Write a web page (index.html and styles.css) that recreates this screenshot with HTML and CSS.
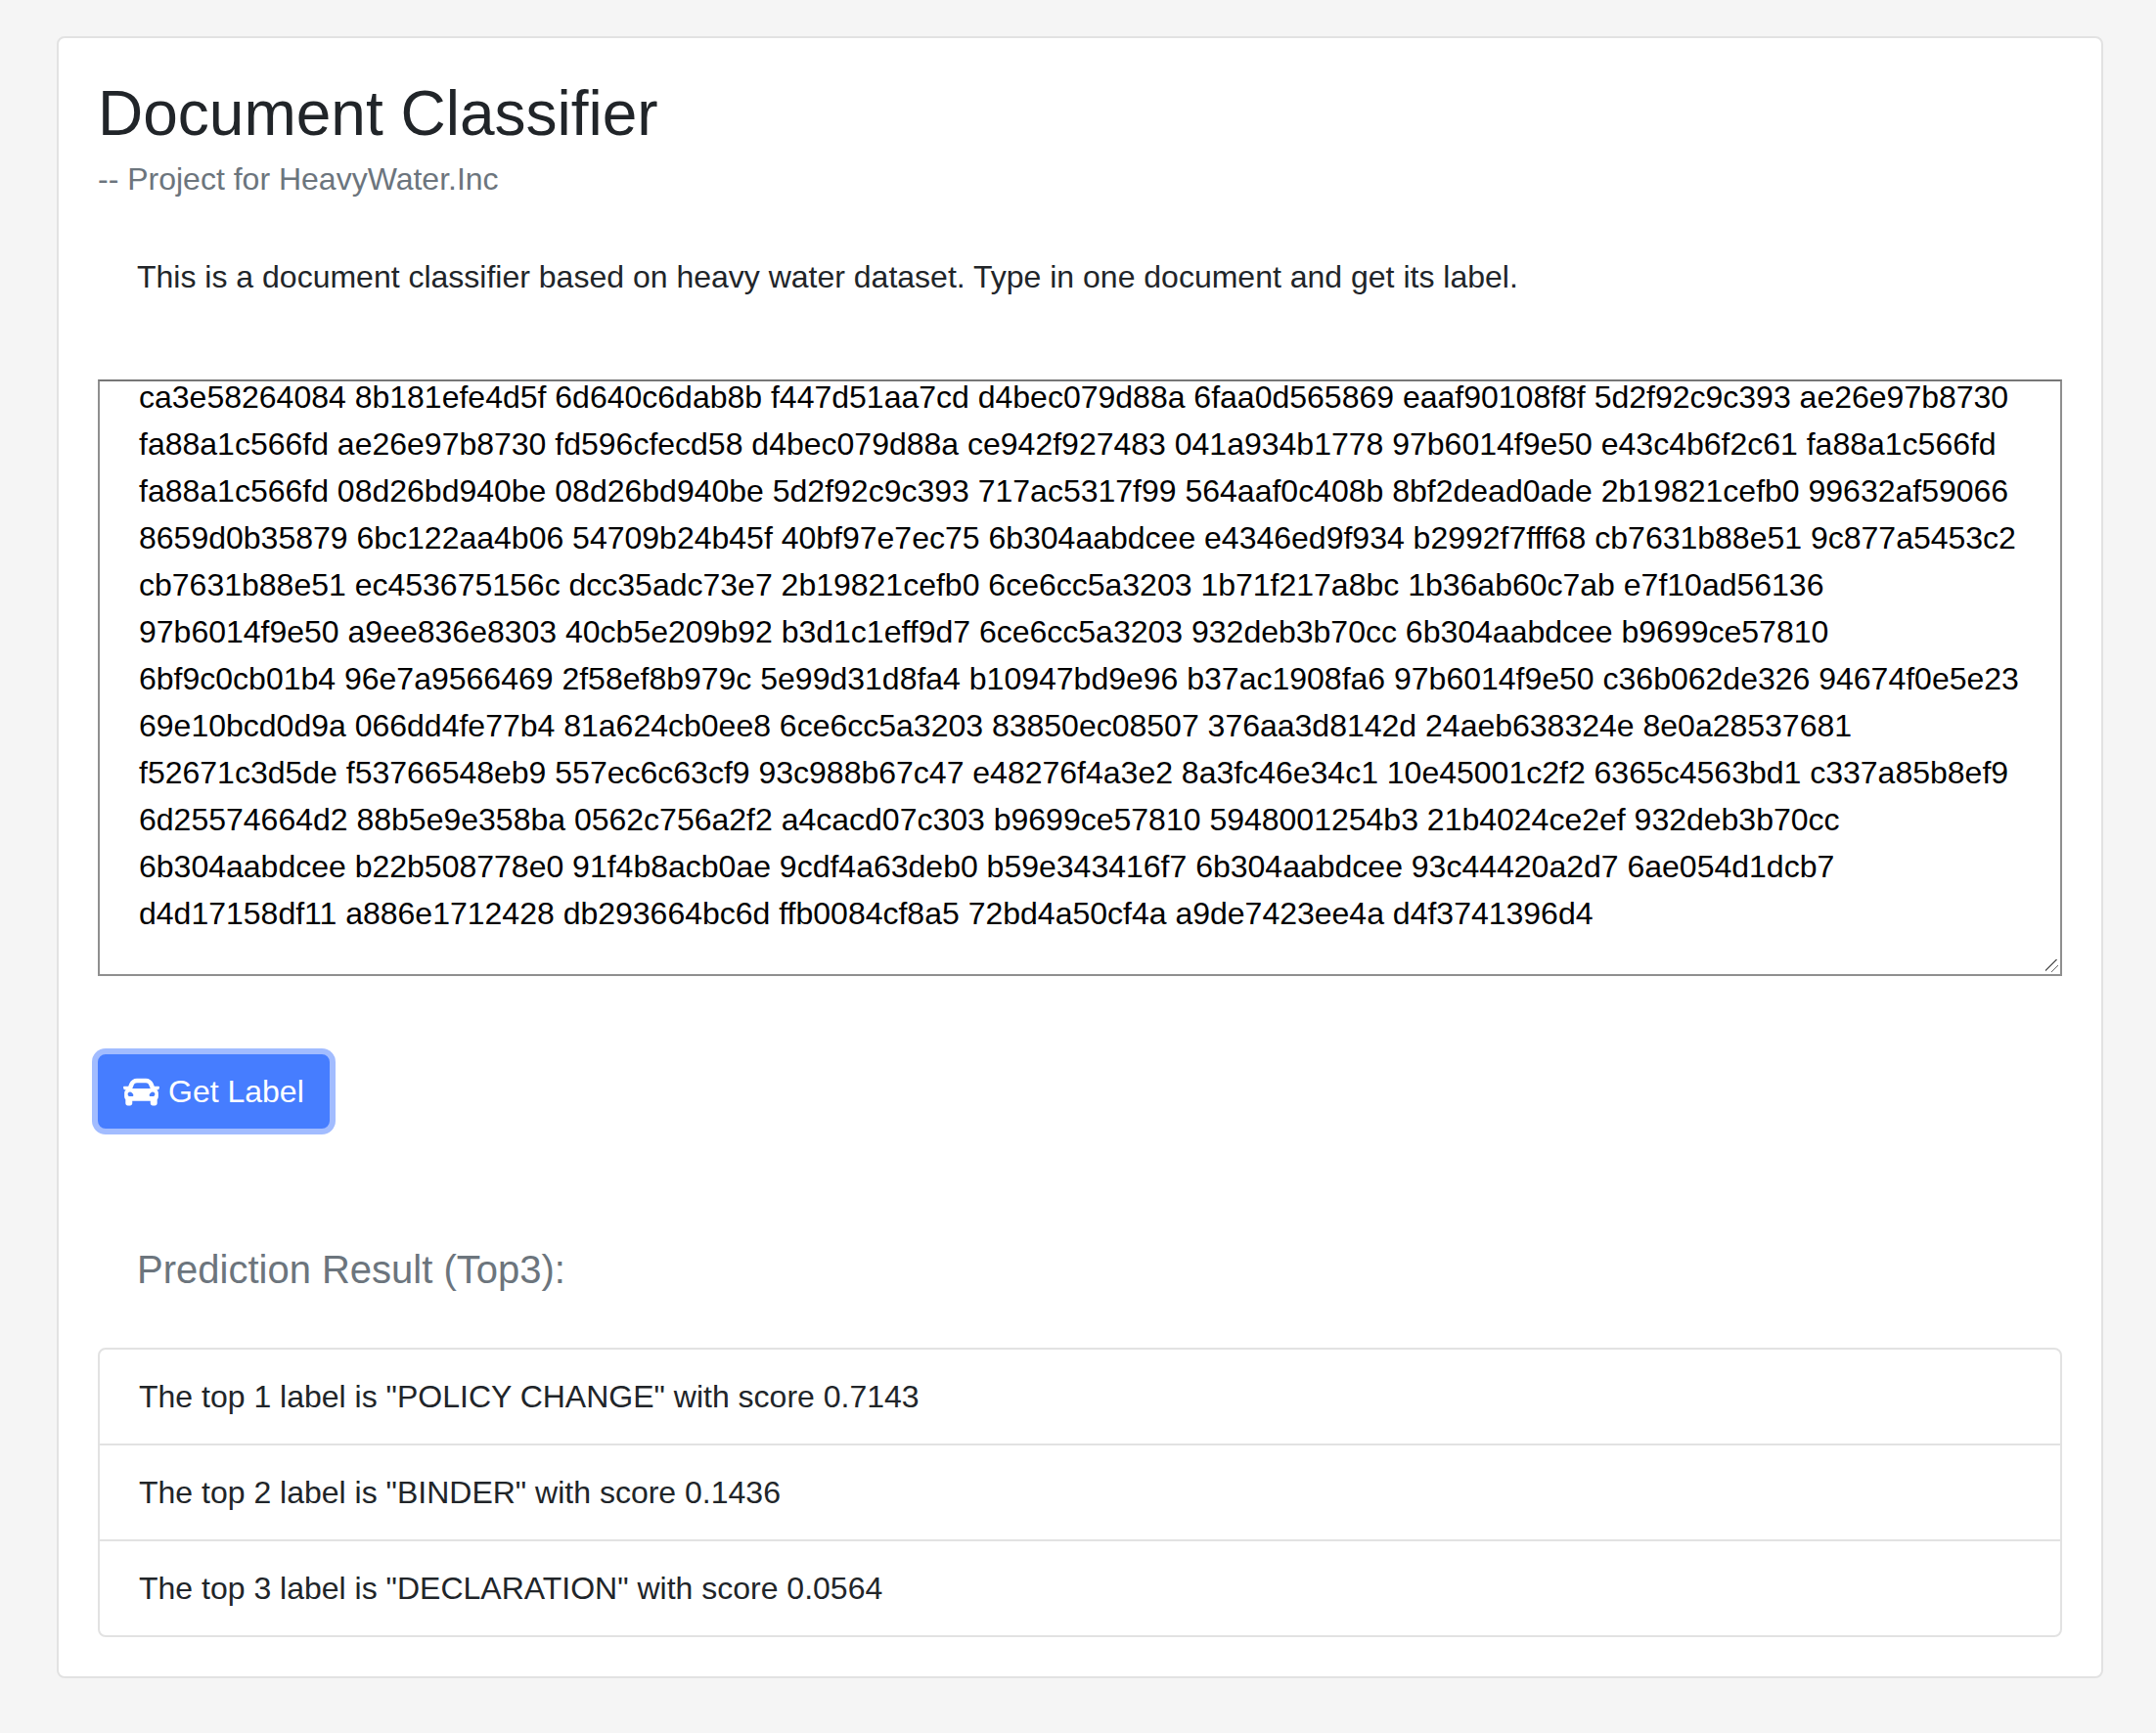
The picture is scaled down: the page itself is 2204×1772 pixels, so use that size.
FILE: index.html
```html
<!DOCTYPE html>
<html lang="en">
<head>
    <meta charset="UTF-8">
    <title>Document Classifier</title>
    <link rel="stylesheet" href="styles.css">
</head>
<body>
    <div class="card">
        <h1 class="title">Document Classifier</h1>
        <div class="subtitle">-- Project for HeavyWater.Inc</div>
        <p class="intro">This is a document classifier based on heavy water dataset. Type in one document and get its label.</p>
        <textarea class="doc-input" id="doc-input" wrap="off" spellcheck="false">ca3e58264084 8b181efe4d5f 6d640c6dab8b f447d51aa7cd d4bec079d88a 6faa0d565869 eaaf90108f8f 5d2f92c9c393 ae26e97b8730
fa88a1c566fd ae26e97b8730 fd596cfecd58 d4bec079d88a ce942f927483 041a934b1778 97b6014f9e50 e43c4b6f2c61 fa88a1c566fd
fa88a1c566fd 08d26bd940be 08d26bd940be 5d2f92c9c393 717ac5317f99 564aaf0c408b 8bf2dead0ade 2b19821cefb0 99632af59066
8659d0b35879 6bc122aa4b06 54709b24b45f 40bf97e7ec75 6b304aabdcee e4346ed9f934 b2992f7fff68 cb7631b88e51 9c877a5453c2
cb7631b88e51 ec453675156c dcc35adc73e7 2b19821cefb0 6ce6cc5a3203 1b71f217a8bc 1b36ab60c7ab e7f10ad56136
97b6014f9e50 a9ee836e8303 40cb5e209b92 b3d1c1eff9d7 6ce6cc5a3203 932deb3b70cc 6b304aabdcee b9699ce57810
6bf9c0cb01b4 96e7a9566469 2f58ef8b979c 5e99d31d8fa4 b10947bd9e96 b37ac1908fa6 97b6014f9e50 c36b062de326 94674f0e5e23
69e10bcd0d9a 066dd4fe77b4 81a624cb0ee8 6ce6cc5a3203 83850ec08507 376aa3d8142d 24aeb638324e 8e0a28537681
f52671c3d5de f53766548eb9 557ec6c63cf9 93c988b67c47 e48276f4a3e2 8a3fc46e34c1 10e45001c2f2 6365c4563bd1 c337a85b8ef9
6d25574664d2 88b5e9e358ba 0562c756a2f2 a4cacd07c303 b9699ce57810 5948001254b3 21b4024ce2ef 932deb3b70cc
6b304aabdcee b22b508778e0 91f4b8acb0ae 9cdf4a63deb0 b59e343416f7 6b304aabdcee 93c44420a2d7 6ae054d1dcb7
d4d17158df11 a886e1712428 db293664bc6d ffb0084cf8a5 72bd4a50cf4a a9de7423ee4a d4f3741396d4</textarea>
        <div class="actions">
            <button class="btn-primary" type="button">
                <svg class="btn-icon" viewBox="0 0 512 512" aria-hidden="true"><path fill="currentColor" d="M499.99 176h-59.87l-16.64-41.6C406.38 91.63 365.57 64 319.5 64h-127c-46.06 0-86.88 27.63-103.99 70.4L71.87 176H12.01C4.2 176-1.53 183.34.37 190.91l6 24C7.7 220.25 12.5 224 18.01 224h20.07C24.65 235.73 16 252.78 16 272v48c0 16.12 6.16 30.67 16 41.93V416c0 17.67 14.33 32 32 32h32c17.67 0 32-14.33 32-32v-32h256v32c0 17.67 14.33 32 32 32h32c17.67 0 32-14.33 32-32v-54.07c9.84-11.25 16-25.8 16-41.93v-48c0-19.22-8.65-36.27-22.07-48H494c5.51 0 10.31-3.75 11.64-9.09l6-24c1.89-7.57-3.84-14.91-11.65-14.91zm-352.06-17.83c7.29-18.22 24.94-30.17 44.57-30.17h127c19.63 0 37.28 11.95 44.57 30.17L384 208H128l19.93-49.83zM96 319.8c-19.2 0-32-12.76-32-31.9S76.8 256 96 256s48 28.71 48 47.85-28.8 15.95-48 15.95zm320 0c-19.2 0-48 3.19-48-15.95S396.8 256 416 256s32 12.76 32 31.9-12.8 31.9-32 31.9z"/></svg>
                Get Label
            </button>
        </div>
        <h2 class="result-title">Prediction Result (Top3):</h2>
        <ul class="result-list">
            <li class="result-item">The top 1 label is "POLICY CHANGE" with score 0.7143</li>
            <li class="result-item">The top 2 label is "BINDER" with score 0.1436</li>
            <li class="result-item">The top 3 label is "DECLARATION" with score 0.0564</li>
        </ul>
    </div>
    <script src="script.js"></script>
</body>
</html>
```

FILE: styles.css
```css
body {
    margin: 0;
    padding: 37px 54px 56px 58px;
    background-color: #f5f5f5;
    color: #212529;
    font-family: "Liberation Sans", Arial, sans-serif;
    font-size: 32px;
    line-height: 48px;
}
.card {
    padding: 39px 40px 40px;
    background: #fff;
    border: 2px solid #e2e2e2;
    border-radius: 8px;
}
.title {
    margin: 0 0 4px;
    font-size: 64px;
    font-weight: 400;
    line-height: 77px;
}
.subtitle {
    color: #6c757d;
}
.intro {
    margin: 52px 0 81px;
    padding-left: 40px;
}
.doc-input {
    display: block;
    box-sizing: border-box;
    width: 100%;
    height: 610px;
    padding: 0 40px 60px;
    overflow: hidden;
    color: #000;
    font-family: inherit;
    font-size: 32px;
    line-height: 48px;
    white-space: pre;
    background: #fff;
    border: 2px solid #8f8f8f;
    border-top-color: #767676;
    border-radius: 0;
    outline: none;
    resize: both;
}
.doc-input::-webkit-resizer {
    background-image: linear-gradient(135deg, transparent 7.2px, #666 7.2px, #666 8.5px, transparent 8.5px, transparent 12.8px, #666 12.8px, #666 14.1px, transparent 14.1px);
    background-repeat: no-repeat;
    background-size: 13px 13px;
}
.actions {
    margin-top: 80px;
}
.btn-primary {
    display: inline-flex;
    align-items: center;
    gap: 9px;
    height: 76px;
    padding: 0 24px;
    color: #fff;
    font-family: inherit;
    font-size: 32px;
    line-height: 48px;
    background-color: #467dff;
    border: 2px solid #467dff;
    border-radius: 8px;
    box-shadow: 0 0 0 6px #a2bcff;
    cursor: pointer;
}
.btn-icon {
    width: 37px;
    height: 37px;
}
.result-title {
    margin: 120px 0 56px;
    padding-left: 40px;
    color: #6c757d;
    font-size: 40px;
    font-weight: 400;
    line-height: 48px;
}
.result-list {
    margin: 0;
    padding: 0;
    list-style: none;
    border: 2px solid #e2e2e2;
    border-radius: 8px;
}
.result-item {
    padding: 24px 40px;
}
.result-item + .result-item {
    border-top: 2px solid #e2e2e2;
}
```

FILE: script.js
```js
// the document box is opened scrolled a little way down
document.getElementById('doc-input').scrollTop = 8;
```
